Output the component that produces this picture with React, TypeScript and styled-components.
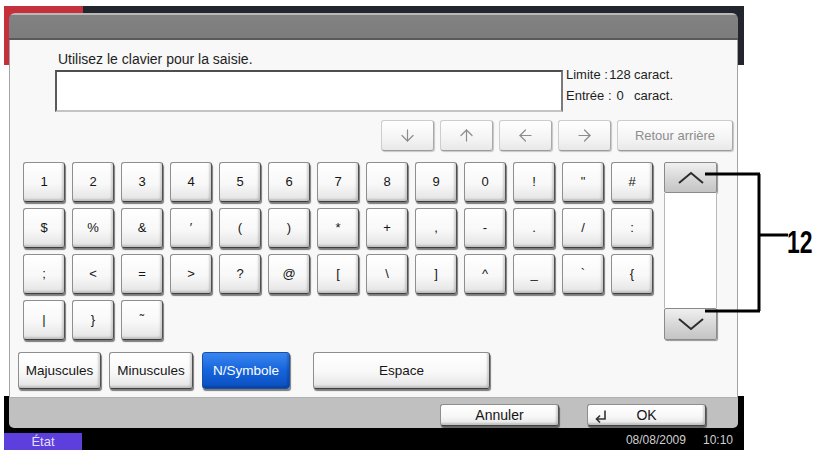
import React from 'react';
import styled, { createGlobalStyle, css } from 'styled-components';
import { ArrowDown, ArrowUp, ArrowLeft, ArrowRight } from 'lucide-react';

const keyRows = [
  ['1', '2', '3', '4', '5', '6', '7', '8', '9', '0', '!', '"', '#'],
  ['$', '%', '&', '′', '(', ')', '*', '+', ',', '-', '.', '/', ':'],
  [';', '<', '=', '>', '?', '@', '[', '\\', ']', '^', '_', '`', '{'],
  ['|', '}', '˜'],
];

const modes = [
  { label: 'Majuscules', width: 83, gap: 0 },
  { label: 'Minuscules', width: 84, gap: 8 },
  { label: 'N/Symbole', width: 88, gap: 9, active: true },
  { label: 'Espace', width: 177, gap: 23 },
];

function Chevron({ down }: { down?: boolean }) {
  return (
    <svg width="28" height="14" viewBox="0 0 28 14">
      <polyline
        points={down ? '2,2 14,12 26,2' : '2,12 14,2 26,12'}
        fill="none"
        stroke="#2d2d2d"
        strokeWidth="2"
      />
    </svg>
  );
}

function ReturnIcon() {
  return (
    <svg width="14" height="14" viewBox="0 0 14 14">
      <path d="M11 1.5v8.5H2.5M6 6.5L2.5 10 6 13.5" fill="none" stroke="#333" strokeWidth="1.6" />
    </svg>
  );
}

function App() {
  return (
    <>
      <GlobalStyle />
      <Page>
        <Screen>
          <Window>
            <TitleBar />
            <Body>
              <Prompt>Utilisez le clavier pour la saisie.</Prompt>
              <EntryRow>
                <EntryField />
                <Counter>
                  <CounterLine>
                    <CounterLabel>Limite :</CounterLabel>
                    <CounterNum>128</CounterNum>caract.
                  </CounterLine>
                  <CounterLine>
                    <CounterLabel>Entrée :</CounterLabel>
                    <CounterNum>0</CounterNum>caract.
                  </CounterLine>
                </Counter>
              </EntryRow>

              <CursorRow>
                <CursorButton>
                  <ArrowDown size={19} strokeWidth={1.5} />
                </CursorButton>
                <CursorButton>
                  <ArrowUp size={19} strokeWidth={1.5} />
                </CursorButton>
                <CursorButton>
                  <ArrowLeft size={19} strokeWidth={1.5} />
                </CursorButton>
                <CursorButton>
                  <ArrowRight size={19} strokeWidth={1.5} />
                </CursorButton>
                <CursorButton $wide>Retour arrière</CursorButton>
              </CursorRow>

              <KeyArea>
                <KeyGrid>
                  {keyRows.flat().map((k, i) => (
                    <Key key={i}>{k}</Key>
                  ))}
                </KeyGrid>
                <Scroller>
                  <ScrollButton>
                    <Chevron />
                  </ScrollButton>
                  <Track />
                  <ScrollButton $bottom>
                    <Chevron down />
                  </ScrollButton>
                </Scroller>
              </KeyArea>

              <ModeRow>
                {modes.map((m) => (
                  <ModeButton key={m.label} $w={m.width} $gap={m.gap} $active={m.active}>
                    {m.label}
                  </ModeButton>
                ))}
              </ModeRow>
            </Body>
            <Footer>
              <FooterButton>Annuler</FooterButton>
              <FooterButton>
                <ReturnSlot>
                  <ReturnIcon />
                </ReturnSlot>
                OK
              </FooterButton>
            </Footer>
          </Window>
          <StatusBar>
            <StateTab>État</StateTab>
            <Clock>
              <span>08/08/2009</span>
              <span>10:10</span>
            </Clock>
          </StatusBar>
        </Screen>

        <Callout>
          <svg width="90" height="146" viewBox="0 0 90 146">
            <path d="M5 4H60M5 141H60M59 4V141M59 65H88" fill="none" stroke="#000" strokeWidth="3" />
          </svg>
          <CalloutLabel>12</CalloutLabel>
        </Callout>
      </Page>
    </>
  );
}

const GlobalStyle = createGlobalStyle`
  html, body {
    margin: 0;
    padding: 0;
    background: #fff;
  }
  body {
    font-family: "Liberation Sans", Arial, sans-serif;
  }
  * {
    box-sizing: border-box;
  }
`;

const Page = styled.div`
  position: relative;
  width: 815px;
  height: 453px;
  padding: 6px 0 0 4px;
`;

const Screen = styled.div`
  width: 740px;
  height: 444px;
  display: flex;
  flex-direction: column;
  background:
    linear-gradient(to right, #c6303a 0 79px, #22252d 79px) top / 100% 59px no-repeat,
    linear-gradient(#000, #000) bottom / 100% 54px no-repeat,
    #fff;
`;

const Window = styled.div`
  margin: 7px 6px 0 5px;
  height: 415px;
  display: flex;
  flex-direction: column;
  border-radius: 6px 6px 5px 5px;
  overflow: hidden;
`;

const TitleBar = styled.div`
  height: 27px;
  background: linear-gradient(#b8b8b8 0 2px, #828282 2px, #7c7c7c 25px, #5a5a5a 25px);
`;

const Body = styled.div`
  flex: 1;
  display: flex;
  flex-direction: column;
  background: #f8f8f8;
  border-left: 1px solid #a4a4a4;
  border-right: 1px solid #a4a4a4;
`;

const Prompt = styled.div`
  margin: 11px 0 0 48px;
  font-size: 14px;
  line-height: 16px;
  color: #1e1e1e;
`;

const EntryRow = styled.div`
  display: flex;
  margin: 3px 0 0 45px;
`;

const EntryField = styled.div`
  width: 508px;
  height: 42px;
  background: #fff;
  border: 2px solid #7a7a7a;
  border-top-color: #4e4e4e;
  border-left-color: #5a5a5a;
  border-bottom-color: #c4c4c4;
`;

const Counter = styled.div`
  margin: -6px 0 0 3px;
  font-size: 13px;
  line-height: 21px;
  color: #1e1e1e;
`;

const CounterLine = styled.div`
  display: flex;
  white-space: nowrap;
`;

const CounterLabel = styled.span`
  flex-shrink: 0;
  width: 42px;
`;

const CounterNum = styled.span`
  flex-shrink: 0;
  width: 24px;
  text-align: center;
  margin-right: 2px;
`;

const buttonReset = css`
  padding: 0;
  margin: 0;
  font-family: inherit;
  cursor: pointer;
  display: flex;
  align-items: center;
  justify-content: center;
`;

const raised = css`
  border: 1px solid #8e8e8e;
  border-right-color: #505050;
  border-bottom-color: #3e3e3e;
  border-radius: 3px;
  background: linear-gradient(#ffffff 0%, #f8f8f8 55%, #e3e3e3 100%);
  box-shadow: inset -2px -2px 2px rgba(0, 0, 0, 0.16), 1px 2px 1px rgba(0, 0, 0, 0.5);
`;

const CursorRow = styled.div`
  display: flex;
  justify-content: flex-end;
  gap: 6px;
  margin: 8px 4px 0 0;
  height: 31px;
`;

const CursorButton = styled.button<{ $wide?: boolean }>`
  ${buttonReset};
  width: ${(p) => (p.$wide ? '116px' : '53px')};
  height: 31px;
  border: 1px solid #cdcdcd;
  border-right-color: #a9a9a9;
  border-bottom-color: #9c9c9c;
  border-radius: 3px;
  background: linear-gradient(#ffffff, #f4f4f4 60%, #e8e8e8);
  box-shadow: 1px 1px 1px rgba(0, 0, 0, 0.2);
  color: #8d8d8d;
  font-size: 13px;
`;

const KeyArea = styled.div`
  display: flex;
  margin: 11px 0 0 13px;
`;

const KeyGrid = styled.div`
  display: grid;
  grid-template-columns: repeat(13, 42px);
  grid-auto-rows: 40px;
  gap: 6px 7px;
`;

const Key = styled.button`
  ${buttonReset};
  ${raised};
  padding-bottom: 2px;
  font-size: 13px;
  color: #151515;
`;

const Scroller = styled.div`
  margin-left: 11px;
  width: 53px;
  height: 178px;
  display: flex;
  flex-direction: column;
`;

const ScrollButton = styled.button<{ $bottom?: boolean }>`
  ${buttonReset};
  height: ${(p) => (p.$bottom ? '32px' : '31px')};
  border: 1px solid #8a8a8a;
  border-radius: 2px;
  background: linear-gradient(#f0f0f0, #d6d6d6 55%, #c4c4c4);
  box-shadow: 1px 1px 1px rgba(0, 0, 0, 0.4);
`;

const Track = styled.div`
  flex: 1;
  background: #fff;
  border-left: 1px solid #b8b8b8;
  border-right: 1px solid #b8b8b8;
`;

const ModeRow = styled.div`
  display: flex;
  margin: 12px 0 0 8px;
`;

const ModeButton = styled.button<{ $w: number; $gap: number; $active?: boolean }>`
  ${buttonReset};
  ${raised};
  width: ${(p) => p.$w}px;
  height: 37px;
  margin-left: ${(p) => p.$gap}px;
  font-size: 13.5px;
  color: #151515;
  ${(p) =>
    p.$active &&
    css`
      color: #fff;
      border-color: #1a4fa8;
      background: linear-gradient(#3a86f0, #1664dc 50%, #0a4fc0);
    `}
`;

const Footer = styled.div`
  height: 31px;
  display: flex;
  justify-content: flex-end;
  align-items: flex-start;
  gap: 28px;
  padding: 6px 32px 0 0;
  background: #c0c0c0;
  border-top: 1px solid #b0b0b0;
`;

const FooterButton = styled.button`
  ${buttonReset};
  ${raised};
  position: relative;
  width: 119px;
  height: 22px;
  font-size: 14px;
  color: #151515;
`;

const ReturnSlot = styled.span`
  position: absolute;
  left: 6px;
  top: 4px;
  display: flex;
`;

const StatusBar = styled.div`
  flex: 1;
  display: flex;
  align-items: flex-end;
  justify-content: space-between;
`;

const StateTab = styled.div`
  width: 78px;
  height: 17px;
  background: #5c3fdc;
  color: #e4deff;
  font-size: 13px;
  line-height: 17px;
  text-align: center;
`;

const Clock = styled.div`
  display: flex;
  gap: 17px;
  padding: 0 11px 2px 0;
  color: #cfcfcf;
  font-size: 12px;
  line-height: 15px;
`;

const Callout = styled.div`
  position: absolute;
  left: 700px;
  top: 170px;
  display: flex;
  align-items: center;
`;

const CalloutLabel = styled.span`
  display: inline-block;
  margin: 0 0 2px -3px;
  font-family: "Liberation Sans", Arial, sans-serif;
  font-weight: bold;
  font-size: 31px;
  line-height: 1;
  color: #000;
  transform: scaleX(0.74);
  transform-origin: left center;
`;

export default App;
